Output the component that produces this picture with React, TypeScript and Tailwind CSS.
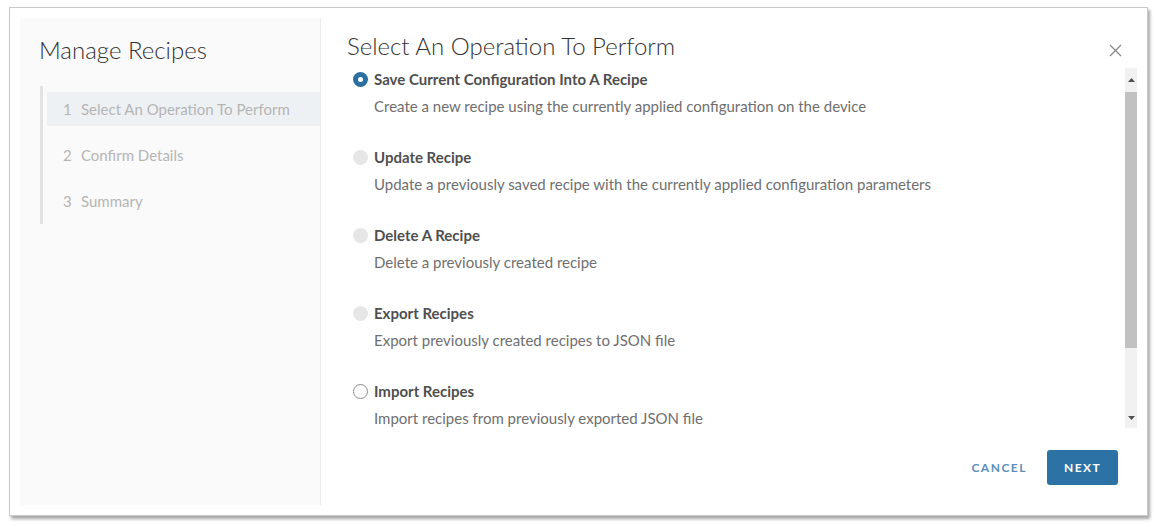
import React from 'react';

const steps = [
  { n: 1, label: 'Select An Operation To Perform', active: true },
  { n: 2, label: 'Confirm Details', active: false },
  { n: 3, label: 'Summary', active: false },
];

type Option = {
  title: string;
  description: string;
  state: 'checked' | 'disabled' | 'empty';
};

const options: Option[] = [
  {
    title: 'Save Current Configuration Into A Recipe',
    description: 'Create a new recipe using the currently applied configuration on the device',
    state: 'checked',
  },
  {
    title: 'Update Recipe',
    description: 'Update a previously saved recipe with the currently applied configuration parameters',
    state: 'disabled',
  },
  {
    title: 'Delete A Recipe',
    description: 'Delete a previously created recipe',
    state: 'disabled',
  },
  {
    title: 'Export Recipes',
    description: 'Export previously created recipes to JSON file',
    state: 'disabled',
  },
  {
    title: 'Import Recipes',
    description: 'Import recipes from previously exported JSON file',
    state: 'empty',
  },
];

function Radio({ state }: { state: Option['state'] }) {
  if (state === 'checked') {
    return (
      <span className="w-[15px] h-[15px] rounded-full bg-[#2b6fa1] flex items-center justify-center">
        <span className="w-[5px] h-[5px] rounded-full bg-white" />
      </span>
    );
  }
  if (state === 'disabled') {
    return <span className="w-[15px] h-[15px] rounded-full bg-[#e6e6e6]" />;
  }
  return <span className="w-[15px] h-[15px] rounded-full bg-white border border-[#8c8c8c]" />;
}

export default function App() {
  return (
    <div className="min-h-screen bg-white pl-[9px] pt-[7px] font-['Lato',sans-serif]">
      {/* Modal card */}
      <div className="w-[1139px] h-[509px] border border-[#c9c9c9] shadow-[2px_3px_3px_rgba(0,0,0,0.35)] p-[10px] bg-white">
        <div className="flex h-full">
          {/* Left nav */}
          <div className="w-[301px] bg-[#fafafa] border-r border-[#ededed] flex flex-col">
            <h1 className="pl-[19px] pt-[17px] h-[68px] text-[24px] leading-[30px] font-light text-[#333]">
              Manage Recipes
            </h1>
            <div className="ml-[20px] border-l-[3px] border-[#e3e3e3] py-[6px] flex flex-col gap-[12px]">
              {steps.map((s) => (
                <div
                  key={s.n}
                  className={`ml-[4px] h-[34px] flex items-center pl-[16px] text-[15px] text-[#b5b5b5] ${
                    s.active ? 'bg-[#eef1f4]' : ''
                  }`}
                >
                  <span className="w-[18px]">{s.n}</span>
                  <span>{s.label}</span>
                </div>
              ))}
            </div>
          </div>

          {/* Right content */}
          <div className="flex-1 flex flex-col">
            <div className="h-[50px] pt-[13px] pl-[26px] pr-[15px] flex items-start justify-between">
              <h2 className="text-[24px] leading-[30px] font-light text-[#333]">
                Select An Operation To Perform
              </h2>
              <svg width="13" height="13" viewBox="0 0 13 13" className="mt-[13px]">
                <path d="M1 1 L12 12 M12 1 L1 12" stroke="#8a8a8a" strokeWidth="1.3" />
              </svg>
            </div>

            <div className="h-[360px] flex">
              <div className="flex-1 pl-[26px] overflow-hidden">
                {options.map((o) => (
                  <div key={o.title} className="h-[78px]">
                    <div className="h-[22px] flex items-center gap-[6px] pl-[6px]">
                      <Radio state={o.state} />
                      <span className="text-[15px] font-bold text-[#4f4f4f]">{o.title}</span>
                    </div>
                    <div className="mt-[6px] pl-[27px] text-[15px] leading-[20px] text-[#6f6f6f]">
                      {o.description}
                    </div>
                  </div>
                ))}
              </div>
              {/* Scrollbar */}
              <div className="w-[12px] bg-[#f1f1f1] flex flex-col">
                <div className="h-[24px] flex items-center justify-center">
                  <svg width="7" height="4" viewBox="0 0 7 4">
                    <path d="M3.5 0 L7 4 L0 4 Z" fill="#505050" />
                  </svg>
                </div>
                <div className="h-[256px] bg-[#c1c1c1]" />
                <div className="flex-1 flex items-end justify-center pb-[8px]">
                  <svg width="7" height="4" viewBox="0 0 7 4">
                    <path d="M0 0 L7 0 L3.5 4 Z" fill="#505050" />
                  </svg>
                </div>
              </div>
            </div>

            <div className="flex-1 flex items-start justify-end pt-[22px] pr-[19px] gap-[18px]">
              <button className="h-[35px] px-[2px] text-[12px] font-bold tracking-[1.5px] text-[#5b8fb8]">
                CANCEL
              </button>
              <button className="h-[35px] w-[71px] rounded-[3px] bg-[#2c72a5] text-white text-[12px] font-bold tracking-[1.4px]">
                NEXT
              </button>
            </div>
          </div>
        </div>
      </div>
    </div>
  );
}
